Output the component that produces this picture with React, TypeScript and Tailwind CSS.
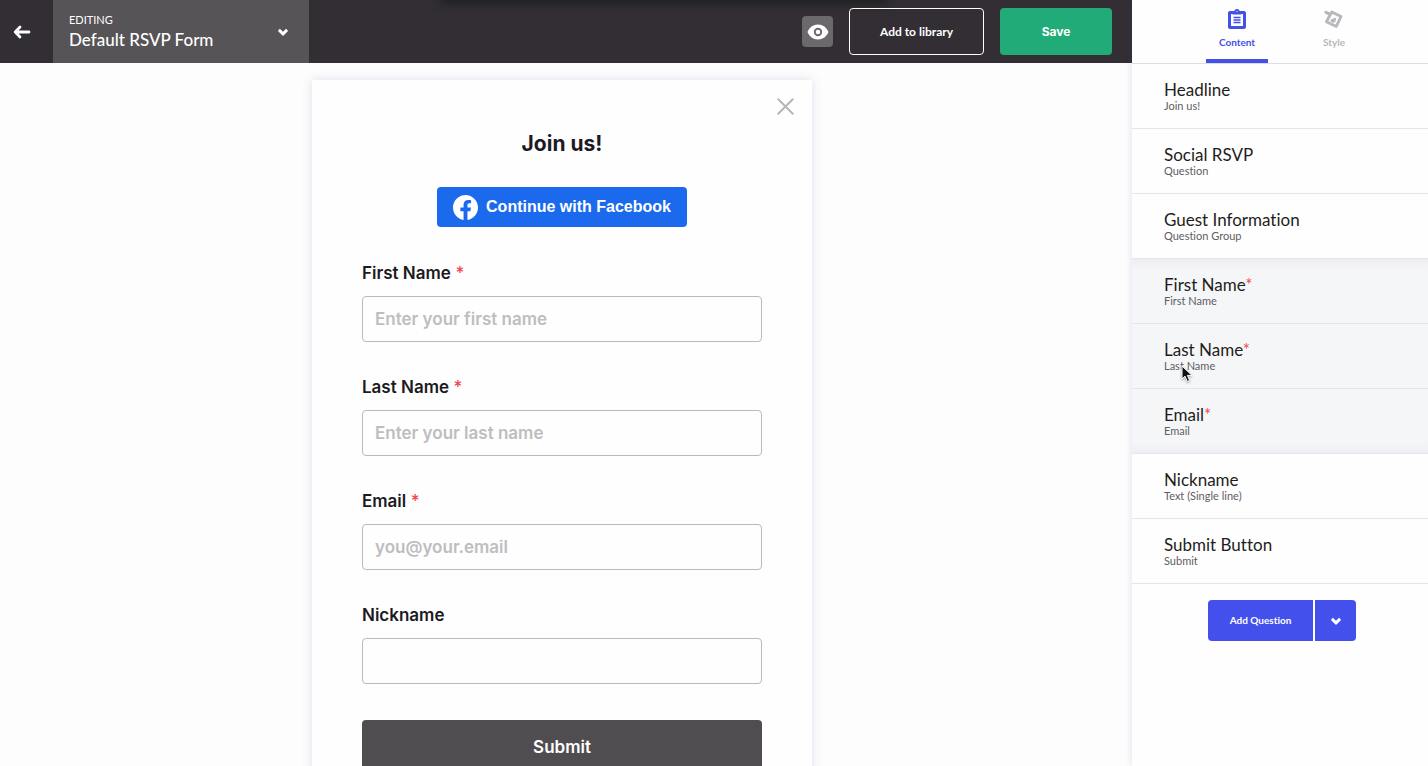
import { X } from 'lucide-react';

type Question = {
  title: string;
  hint: string;
  required?: boolean;
};

type Field = {
  id: string;
  label: string;
  placeholder?: string;
  type?: string;
  required?: boolean;
};

const intro: Question[] = [
  { title: 'Headline', hint: 'Join us!' },
  { title: 'Social RSVP', hint: 'Question' },
  { title: 'Guest Information', hint: 'Question Group' },
];

const group: Question[] = [
  { title: 'First Name', hint: 'First Name', required: true },
  { title: 'Last Name', hint: 'Last Name', required: true },
  { title: 'Email', hint: 'Email', required: true },
];

const outro: Question[] = [
  { title: 'Nickname', hint: 'Text (Single line)' },
  { title: 'Submit Button', hint: 'Submit' },
];

const fields: Field[] = [
  { id: 'first-name', label: 'First Name', placeholder: 'Enter your first name', required: true },
  { id: 'last-name', label: 'Last Name', placeholder: 'Enter your last name', required: true },
  { id: 'email', label: 'Email', placeholder: 'you@your.email', type: 'email', required: true },
  { id: 'nickname', label: 'Nickname' },
];

function Chevron() {
  return (
    <svg width="10" height="8" viewBox="0 0 10 8" aria-hidden="true">
      <path
        fill="currentColor"
        d="M.2 2.400 1.900.8 5 3.800 8.100.8l1.700 1.600c.2.3.2.5 0 .8L5.500 7.500c-.3.3-.7.3-1 0L.2 3.200c-.2-.3-.2-.5 0-.8Z"
      />
    </svg>
  );
}

function BackIcon() {
  return (
    <svg width="18" height="14" viewBox="0 0 18 14" fill="none" aria-hidden="true">
      <path d="M7 2 2.2 7 7 12M2.5 7H16" stroke="currentColor" strokeWidth="2.8" strokeLinecap="round" strokeLinejoin="round" />
    </svg>
  );
}

function EyeIcon() {
  return (
    <svg width="22" height="16" viewBox="0 0 22 16" aria-hidden="true">
      <path
        fill="currentColor"
        fillRule="evenodd"
        d="M11 .5C6.2.5 2.2 3.500.5 8c1.700 4.500 5.700 7.500 10.500 7.500s8.800-3 10.500-7.500C19.800 3.500 15.800.5 11 .5Zm0 11.700a4.200 4.200 0 1 1 0-8.400 4.200 4.200 0 0 1 0 8.400Zm0-1.900a2.300 2.300 0 1 0 0-4.600 2.300 2.300 0 0 0 0 4.600Z"
      />
    </svg>
  );
}

function ContentIcon() {
  return (
    <svg width="18" height="20" viewBox="0 0 18 20" aria-hidden="true">
      <path
        fill="currentColor"
        fillRule="evenodd"
        d="M2 2h4.300a2.800 2.800 0 0 1 5.400 0H16c1.100 0 2 .9 2 2v14c0 1.100-.9 2-2 2H2c-1.100 0-2-.9-2-2V4c0-1.100.9-2 2-2Zm1 3v12h12V5h-1.500v.5h-9V5H3Z"
      />
      <path d="M5.500 8.500h7M5.500 11h7M5.500 13.500h7" stroke="currentColor" strokeWidth="1.300" />
      <circle cx="9" cy="2.300" r=".6" fill="#fff" />
    </svg>
  );
}

function StyleIcon() {
  return (
    <svg width="20" height="20" viewBox="0 0 20 20" fill="none" aria-hidden="true">
      <path d="m7.800 3 9.200 4.600-4.700 9.800-9.900-4.700Z" stroke="currentColor" strokeWidth="2.800" strokeLinejoin="round" />
      <path d="m2 3.400 4 1.800" stroke="currentColor" strokeWidth="3.200" strokeLinecap="round" />
      <path d="m6.600 10.500 5.800-2-1 4.300-1.900 1.100-3-1.400Z" fill="currentColor" />
    </svg>
  );
}

function FacebookIcon() {
  return (
    <svg width="25" height="25" viewBox="0 0 24 24" aria-hidden="true">
      <path
        fill="currentColor"
        d="M24 12.073C24 5.405 18.627 0 12 0S0 5.405 0 12.073C0 18.100 4.388 23.094 10.125 24v-8.437H7.078v-3.490h3.047V9.413c0-3.026 1.792-4.697 4.533-4.697 1.312 0 2.686.236 2.686.236v2.971h-1.514c-1.491 0-1.956.931-1.956 1.886v2.264h3.328l-.532 3.490h-2.796V24C19.612 23.094 24 18.100 24 12.073Z"
      />
    </svg>
  );
}

function Pointer() {
  return (
    <svg
      className="pointer-events-none absolute left-[49px] top-[41px] drop-shadow-[0_1px_1px_rgba(0,0,0,0.35)]"
      width="12"
      height="18"
      viewBox="0 0 12 18"
      aria-hidden="true"
    >
      <path d="M1 1v13l3-2.800 2.200 5.200 2.400-1-2.200-5H11Z" fill="#111" stroke="#fff" strokeWidth="1" />
    </svg>
  );
}

function QuestionRow({ question, hovered }: { question: Question; hovered?: boolean }) {
  return (
    <li className="relative border-b border-[#e6e5ea]">
      <button type="button" className="block w-full px-8 py-4 text-left">
        <span className="block text-[17px] leading-5 text-[#1f1d21]">
          {question.title}
          {question.required && <span className="text-[#f0484e]">*</span>}
        </span>
        <span className="block text-[11px] leading-3 text-[#5f5d62]">{question.hint}</span>
      </button>
      {hovered && <Pointer />}
    </li>
  );
}

function TopBar() {
  return (
    <header className="relative flex h-[63px] shrink-0 items-center overflow-hidden bg-[#322e33] text-white">
      <div className="pointer-events-none absolute inset-x-[444px] -top-2 h-2 min-w-[430px] shadow-[0_0_10px_3px_#1c1f20] lg:right-[248px]" />
      <button type="button" aria-label="Back" className="flex w-[53px] items-center justify-center self-stretch pr-2.5">
        <BackIcon />
      </button>
      <button type="button" className="flex w-64 items-center justify-between self-stretch bg-[#565457] pl-4 pr-[21px] text-left">
        <span>
          <span className="block text-[11px] leading-4">EDITING</span>
          <span className="block text-[17px] font-medium leading-6">Default RSVP Form</span>
        </span>
        <Chevron />
      </button>
      <div className="relative ml-auto flex items-center gap-4 pr-5">
        <button type="button" aria-label="Preview" className="flex size-[31px] items-center justify-center rounded bg-[#6b696c]">
          <EyeIcon />
        </button>
        <button type="button" className="h-[47px] w-[135px] rounded border border-white text-xs font-bold">
          Add to library
        </button>
        <button type="button" className="h-[47px] w-28 rounded bg-[#20ab78] font-['Inter',sans-serif] text-xs font-bold">
          Save
        </button>
      </div>
    </header>
  );
}

function FormPreview() {
  return (
    <form className="relative mx-auto mt-[17px] w-full max-w-[500px] bg-[#fefefe] px-[50px] pb-12 pt-12 font-['Inter',sans-serif] shadow-[0_0_10px_rgba(90,60,140,0.16)]">
      <button type="button" aria-label="Close" className="absolute right-3 top-3 text-[#b5b3b8]">
        <X size={29} strokeWidth={1.5} />
      </button>
      <h1 className="text-center text-[21px] font-bold leading-8 text-[#1c1a1e]">Join us!</h1>
      <button
        type="button"
        className="mx-auto mt-[27px] flex h-10 w-[250px] items-center justify-center gap-2 rounded bg-[#1b6aee] font-['Liberation_Sans',sans-serif] text-base font-bold text-white"
      >
        <FacebookIcon />
        Continue with Facebook
      </button>
      <div className="mt-[33px] flex flex-col gap-8">
        {fields.map((field) => (
          <div key={field.id}>
            <label htmlFor={field.id} className="block text-[17px] font-semibold leading-[26px] text-[#1c1a1e]">
              {field.label}
              {field.required && <span className="font-medium text-[#f0484e]"> *</span>}
            </label>
            <input
              id={field.id}
              type={field.type ?? 'text'}
              placeholder={field.placeholder}
              className="mt-2.5 block h-[46px] w-full rounded border border-[#bbb9be] bg-transparent px-3 text-[17px] font-semibold placeholder:text-[#bfbdc1]"
            />
          </div>
        ))}
      </div>
      <button type="submit" className="mt-9 h-14 w-full rounded bg-[#504d50] text-[17px] font-semibold text-white">
        Submit
      </button>
    </form>
  );
}

function Sidebar() {
  return (
    <aside className="relative flex w-[296px] shrink-0 flex-col bg-[#fefefe] shadow-[0_0_8px_rgba(90,60,140,0.16)]">
      <nav className="flex h-16 shrink-0 justify-center gap-[35px] border-b border-[#dddce0] pl-[11px] text-[10px] font-bold leading-4">
        <a href="#content" className="flex w-[62px] flex-col items-center border-b-4 border-[#4450ec] pt-[9px] text-[#4450ec]">
          <ContentIcon />
          <span className="mt-[5px]">Content</span>
        </a>
        <a href="#style" className="flex w-[62px] flex-col items-center pt-[9px] text-[#b9b7bb]">
          <StyleIcon />
          <span className="mt-[5px]">Style</span>
        </a>
      </nav>
      <ul>
        {intro.map((q) => (
          <QuestionRow key={q.title} question={q} />
        ))}
      </ul>
      <ul className="bg-[#f5f6f8] shadow-[inset_0_12px_12px_-10px_rgba(110,60,130,0.08),inset_0_-12px_12px_-10px_rgba(110,60,130,0.08)]">
        {group.map((q) => (
          <QuestionRow key={q.title} question={q} hovered={q.title === 'Last Name'} />
        ))}
      </ul>
      <ul>
        {outro.map((q) => (
          <QuestionRow key={q.title} question={q} />
        ))}
      </ul>
      <div className="mt-4 flex justify-center gap-0.5 pl-1 text-white">
        <button type="button" className="h-[41px] w-[105px] rounded-l bg-[#4450ec] text-[10px] font-bold">
          Add Question
        </button>
        <button type="button" aria-label="More question types" className="flex h-[41px] w-[41px] items-center justify-center rounded-r bg-[#4450ec]">
          <Chevron />
        </button>
      </div>
    </aside>
  );
}

export default function App() {
  return (
    <div className="flex h-screen overflow-hidden bg-[#fdfdfd] font-['Lato',sans-serif] [font-variant-ligatures:no-common-ligatures]">
      <div className="flex min-w-0 flex-1 flex-col">
        <TopBar />
        <main className="min-h-0 flex-1 overflow-hidden pr-2">
          <FormPreview />
        </main>
      </div>
      <Sidebar />
    </div>
  );
}
